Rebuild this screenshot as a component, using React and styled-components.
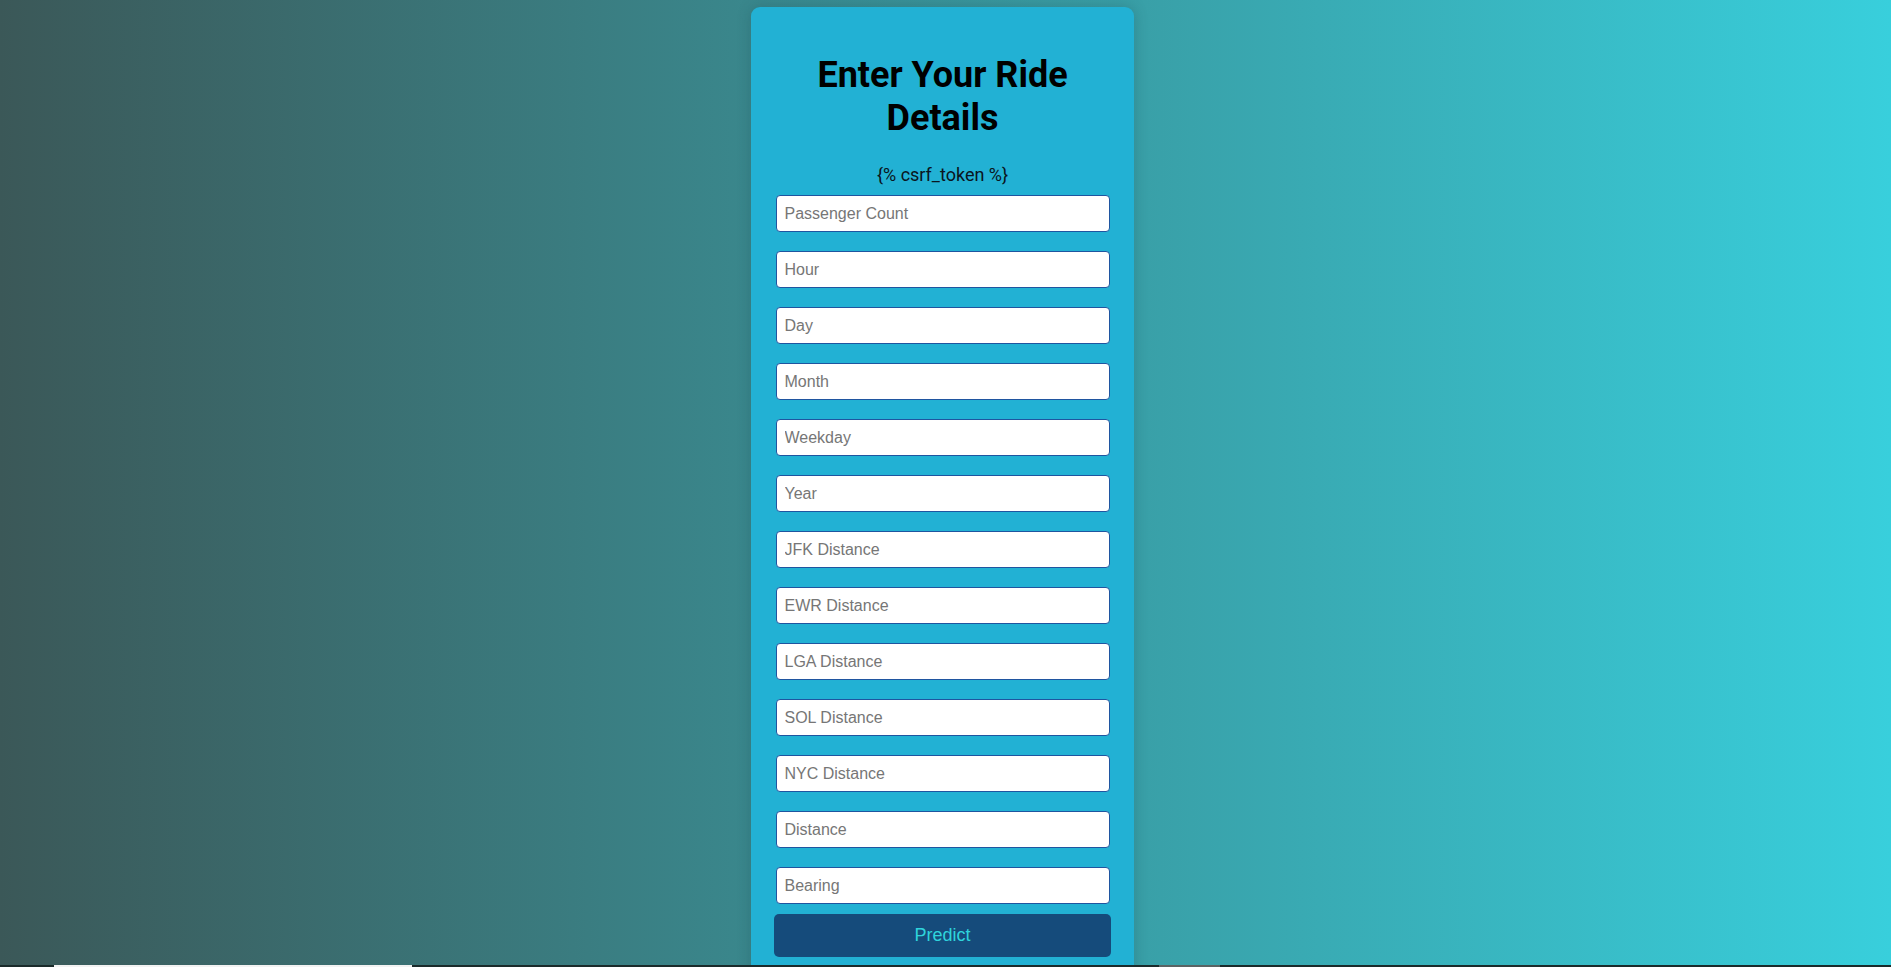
import React from "react";
import styled, { createGlobalStyle } from "styled-components";

const Global = createGlobalStyle`
  html, body { margin: 0; padding: 0; }
  body {
    min-height: 100vh;
    background: linear-gradient(to right, #3b5858 0%, #38cfdc 100%);
    background-attachment: fixed;
    font-family: Roboto, "Liberation Sans", sans-serif;
  }
`;

const Page = styled.div`
  display: flex;
  justify-content: center;
  padding-top: 7px;
  padding-right: 6px;
`;

const Card = styled.form`
  width: 383px;
  box-sizing: border-box;
  padding: 25px 23px 25px 23px;
  background: #22b1d4;
  border-radius: 9px;
  box-shadow: 0 0 14px rgba(20, 60, 70, 0.25);
  display: flex;
  flex-direction: column;
  align-items: center;
`;

const Title = styled.h1`
  font-family: Roboto, "Liberation Sans", sans-serif;
  font-weight: 700;
  font-size: 36px;
  line-height: 43px;
  margin: 22px 0 24px;
  text-align: center;
  color: #000;
  width: 290px;
`;

const Token = styled.div`
  font-family: Roboto, "Liberation Sans", sans-serif;
  font-size: 18px;
  line-height: 21px;
  color: #0a1520;
  margin-bottom: 10px;
`;

const Input = styled.input`
  width: 334px;
  height: 37px;
  box-sizing: border-box;
  margin: 0 0 19px;
  padding: 0 8px;
  border: 1px solid #1f55a0;
  border-radius: 4px;
  background: #fff;
  font-family: "Liberation Sans", Arial, sans-serif;
  font-size: 16px;
  color: #222;
  outline: none;
  &::placeholder { color: #767676; }
  &:last-of-type { margin-bottom: 10px; }
`;

const Button = styled.button`
  width: 337px;
  height: 43px;
  border: none;
  border-radius: 5px;
  background: #154b7b;
  color: #2fd4dc;
  font-family: "Liberation Sans", Arial, sans-serif;
  font-size: 18px;
  cursor: pointer;
`;

const BottomStrip = styled.div`
  position: fixed;
  left: 0;
  right: 0;
  bottom: 0;
  height: 2px;
  background: #1b2b2b;
`;

const StripSeg = styled.div`
  position: absolute;
  top: 0;
  height: 2px;
  left: ${(p) => p.$left}px;
  width: ${(p) => p.$width}px;
  background: ${(p) => p.$color};
`;

const fields = [
  "Passenger Count",
  "Hour",
  "Day",
  "Month",
  "Weekday",
  "Year",
  "JFK Distance",
  "EWR Distance",
  "LGA Distance",
  "SOL Distance",
  "NYC Distance",
  "Distance",
  "Bearing",
];

export default function App() {
  return (
    <>
      <Global />
      <Page>
        <Card onSubmit={(e) => e.preventDefault()}>
          <Title>Enter Your Ride Details</Title>
          <Token>{"{% csrf_token %}"}</Token>
          {fields.map((f) => (
            <Input key={f} type="text" placeholder={f} />
          ))}
          <Button type="submit">Predict</Button>
        </Card>
      </Page>
      <BottomStrip>
        <StripSeg $left={54} $width={358} $color="#f2f2f2" />
        <StripSeg $left={1159} $width={61} $color="#5a6464" />
      </BottomStrip>
    </>
  );
}
